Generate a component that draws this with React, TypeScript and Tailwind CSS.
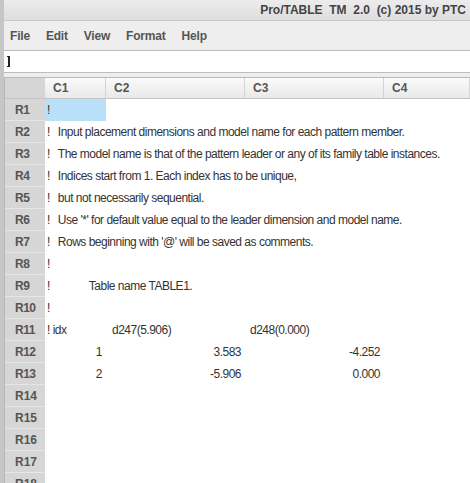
const ROWS: string[] = [
  '',
  'Input placement dimensions and model name for each pattern member.',
  'The model name is that of the pattern leader or any of its family table instances.',
  'Indices start from 1. Each index has to be unique,',
  'but not necessarily sequential.',
  "Use '*' for default value equal to the leader dimension and model name.",
  "Rows beginning with '@' will be saved as comments.",
  '',
  'Table name TABLE1.',
  '',
]

const NUMBERS = [
  ['1', '3.583', '-4.252'],
  ['2', '-5.906', '0.000'],
]

const COLS = 'grid grid-cols-[40px_61px_139px_139px_1fr]'
const CELL = 'h-[22px] text-[12px] tracking-[-0.5px] text-[#333]'

function RowHead({ n }: { n: number }) {
  return (
    <div className="h-full bg-[#d6d6d6] border-b border-[#e6e6e6] pl-[10px] flex items-center text-[12px] font-bold text-[#555]">
      R{n}
    </div>
  )
}

export default function App() {
  return (
    <div
      className="w-[470px] h-[483px] overflow-hidden bg-[#eeeeee] border-l-[4px] border-[#c6c6c6] text-[#333]"
      style={{ fontFamily: '"Liberation Sans", Arial, sans-serif' }}
    >
      {/* title bar */}
      <div className="h-[21px] bg-gradient-to-b from-[#ececec] to-[#dedede] border-b border-[#c8c8c8] flex items-center justify-end pr-[4px]">
        <span className="whitespace-pre text-[12px] font-bold text-[#444]">Pro/TABLE  TM  2.0  (c) 2015 by PTC</span>
      </div>

      {/* menu */}
      <div className="h-[29px] flex items-center gap-[16px] pl-[6px] text-[12px] font-bold tracking-[-0.2px] text-[#555]">
        <span>File</span>
        <span>Edit</span>
        <span>View</span>
        <span>Format</span>
        <span>Help</span>
      </div>

      {/* cell editor */}
      <div className="h-[23px] bg-white border-y border-[#bdbdbd] flex items-center pl-[3px]">
        <div className="w-[3px] h-[11px] border-y border-r-2 border-[#222]" />
      </div>

      <div className="h-[4px]" />

      {/* sheet */}
      <div className="bg-white border-l border-t border-[#b8b8b8] h-full">
        <div className={`${COLS} h-[21px] border-b border-[#c4c4c4] text-[12px] font-bold text-[#555]`}>
          <div className="bg-[#d6d6d6]" />
          {['C1', 'C2', 'C3', 'C4'].map((c) => (
            <div
              key={c}
              className="bg-gradient-to-b from-[#fafafa] to-[#e9e9e9] border-r border-[#d4d4d4] flex items-center pl-[8px]"
            >
              {c}
            </div>
          ))}
        </div>

        {ROWS.map((text, i) => (
          <div key={i} className={`${COLS} ${CELL}`}>
            <RowHead n={i + 1} />
            {i === 0 ? (
              <div className="bg-[#b8e0f9] flex items-center pl-[2px]">!</div>
            ) : (
              <div className="col-span-4 flex items-center pl-[2px] whitespace-pre">
                !
                {text && <span className={i === 8 ? 'ml-[39px]' : 'ml-[8px]'}>{text}</span>}
              </div>
            )}
          </div>
        ))}

        <div className={`${COLS} ${CELL}`}>
          <RowHead n={11} />
          <div className="flex items-center pl-[2px] whitespace-pre">! idx</div>
          <div className="flex items-center pl-[6px]">d247(5.906)</div>
          <div className="flex items-center pl-[5px]">d248(0.000)</div>
          <div />
        </div>

        {NUMBERS.map((r, i) => (
          <div key={i} className={`${COLS} ${CELL}`}>
            <RowHead n={12 + i} />
            {r.map((v, j) => (
              <div key={j} className="flex items-center justify-end pr-[4px]">
                {v}
              </div>
            ))}
            <div />
          </div>
        ))}

        {[14, 15, 16, 17, 18].map((n) => (
          <div key={n} className={`${COLS} h-[22px]`}>
            <RowHead n={n} />
          </div>
        ))}
      </div>
    </div>
  )
}
